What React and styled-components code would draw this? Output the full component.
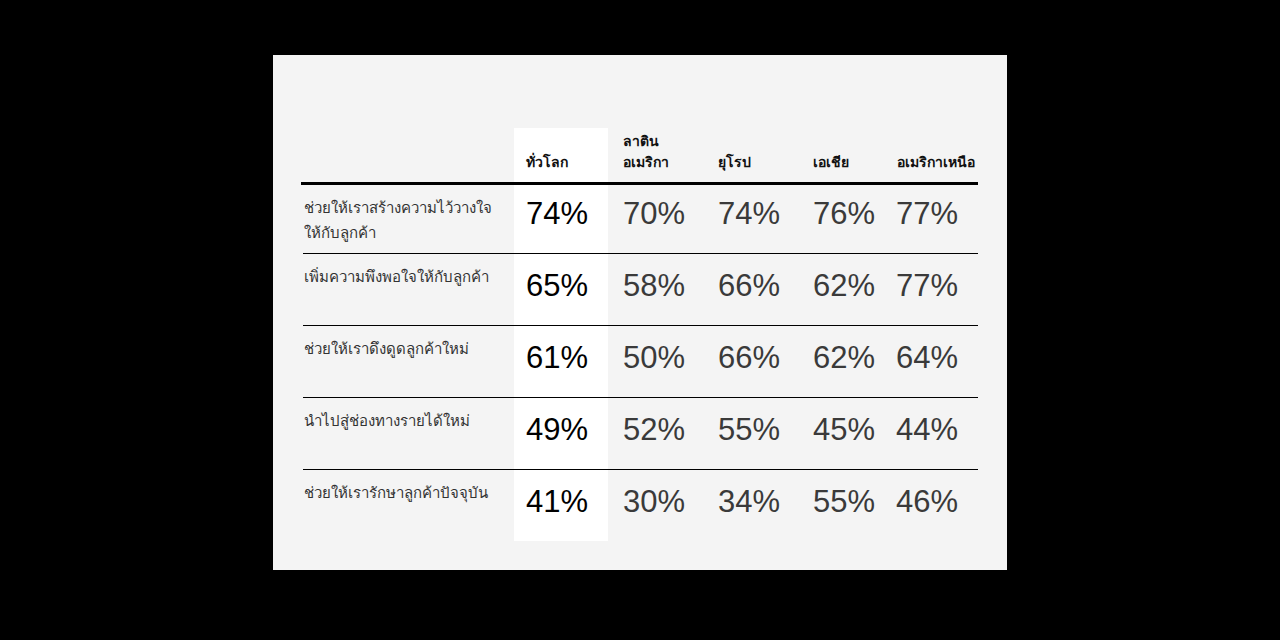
import React from 'react';
import styled, { createGlobalStyle } from 'styled-components';

const GlobalStyle = createGlobalStyle`
  html, body {
    margin: 0;
    padding: 0;
    background: #000;
  }
  body {
    font-family: "Liberation Sans", Arial, sans-serif;
  }
`;

const Page = styled.div`
  width: 1280px;
  height: 640px;
  background: #000;
  display: flex;
  justify-content: center;
  align-items: flex-start;
  padding-top: 55px;
  box-sizing: border-box;
`;

const Card = styled.div`
  width: 734px;
  height: 515px;
  background: #f4f4f4;
  box-sizing: border-box;
  padding: 73px 29px 29px 28px;
`;

const Table = styled.div`
  width: 677px;
  display: flex;
  flex-direction: column;
`;

const HeadRow = styled.div`
  display: grid;
  grid-template-columns: 213px 94px 95px 95px 95px 85px;
  height: 57px;
  box-sizing: border-box;
  border-bottom: 3px solid #000;
`;

const HeadCell = styled.div`
  display: flex;
  align-items: flex-end;
  padding: 0 0 9px ${p => p.$pad}px;
  background: ${p => (p.$hl ? '#fff' : 'transparent')};
  font-size: 14px;
  font-weight: 700;
  line-height: 21px;
  color: #111;
  white-space: nowrap;
`;

const Row = styled.div`
  display: grid;
  grid-template-columns: 211px 94px 95px 95px 95px 84px;
  margin-left: 2px;
  height: ${p => (p.$first ? 68 : 72)}px;
  box-sizing: border-box;
  border-top: ${p => (p.$first ? 'none' : '1px solid #000')};
`;

const Label = styled.div`
  padding: 10px 0 0 1px;
  font-size: 15px;
  line-height: 25px;
  color: #333;
  white-space: nowrap;
`;

const Value = styled.div`
  padding: ${p => (p.$first ? 11 : 14)}px 0 0 ${p => p.$pad}px;
  font-size: 31px;
  line-height: 36px;
  color: ${p => (p.$hl ? '#000' : '#3a3a3a')};
  background: ${p => (p.$hl ? '#fff' : 'transparent')};
  white-space: nowrap;
`;

const regions = [
  { name: ['ทั่วโลก'], pad: 12, hl: true },
  { name: ['ลาติน', 'อเมริกา'], pad: 15 },
  { name: ['ยุโรป'], pad: 15 },
  { name: ['เอเชีย'], pad: 15 },
  { name: ['อเมริกาเหนือ'], pad: 4 },
];

const rows = [
  { label: ['ช่วยให้เราสร้างความไว้วางใจ', 'ให้กับลูกค้า'], values: [74, 70, 74, 76, 77] },
  { label: ['เพิ่มความพึงพอใจให้กับลูกค้า'], values: [65, 58, 66, 62, 77] },
  { label: ['ช่วยให้เราดึงดูดลูกค้าใหม่'], values: [61, 50, 66, 62, 64] },
  { label: ['นำไปสู่ช่องทางรายได้ใหม่'], values: [49, 52, 55, 45, 44] },
  { label: ['ช่วยให้เรารักษาลูกค้าปัจจุบัน'], values: [41, 30, 34, 55, 46] },
];

export default function App() {
  return (
    <>
      <GlobalStyle />
      <Page>
        <Card>
          <Table>
            <HeadRow>
              <HeadCell $pad={0} />
              {regions.map((r, i) => (
                <HeadCell key={i} $pad={r.pad} $hl={r.hl}>
                  <div>
                    {r.name.map((n, j) => <div key={j}>{n}</div>)}
                  </div>
                </HeadCell>
              ))}
            </HeadRow>
            {rows.map((row, i) => (
              <Row key={i} $first={i === 0}>
                <Label>
                  {row.label.map((l, j) => <div key={j}>{l}</div>)}
                </Label>
                {row.values.map((v, j) => (
                  <Value key={j} $first={i === 0} $pad={j === 4 ? 3 : regions[j].pad} $hl={regions[j].hl}>
                    {v}%
                  </Value>
                ))}
              </Row>
            ))}
          </Table>
        </Card>
      </Page>
    </>
  );
}
